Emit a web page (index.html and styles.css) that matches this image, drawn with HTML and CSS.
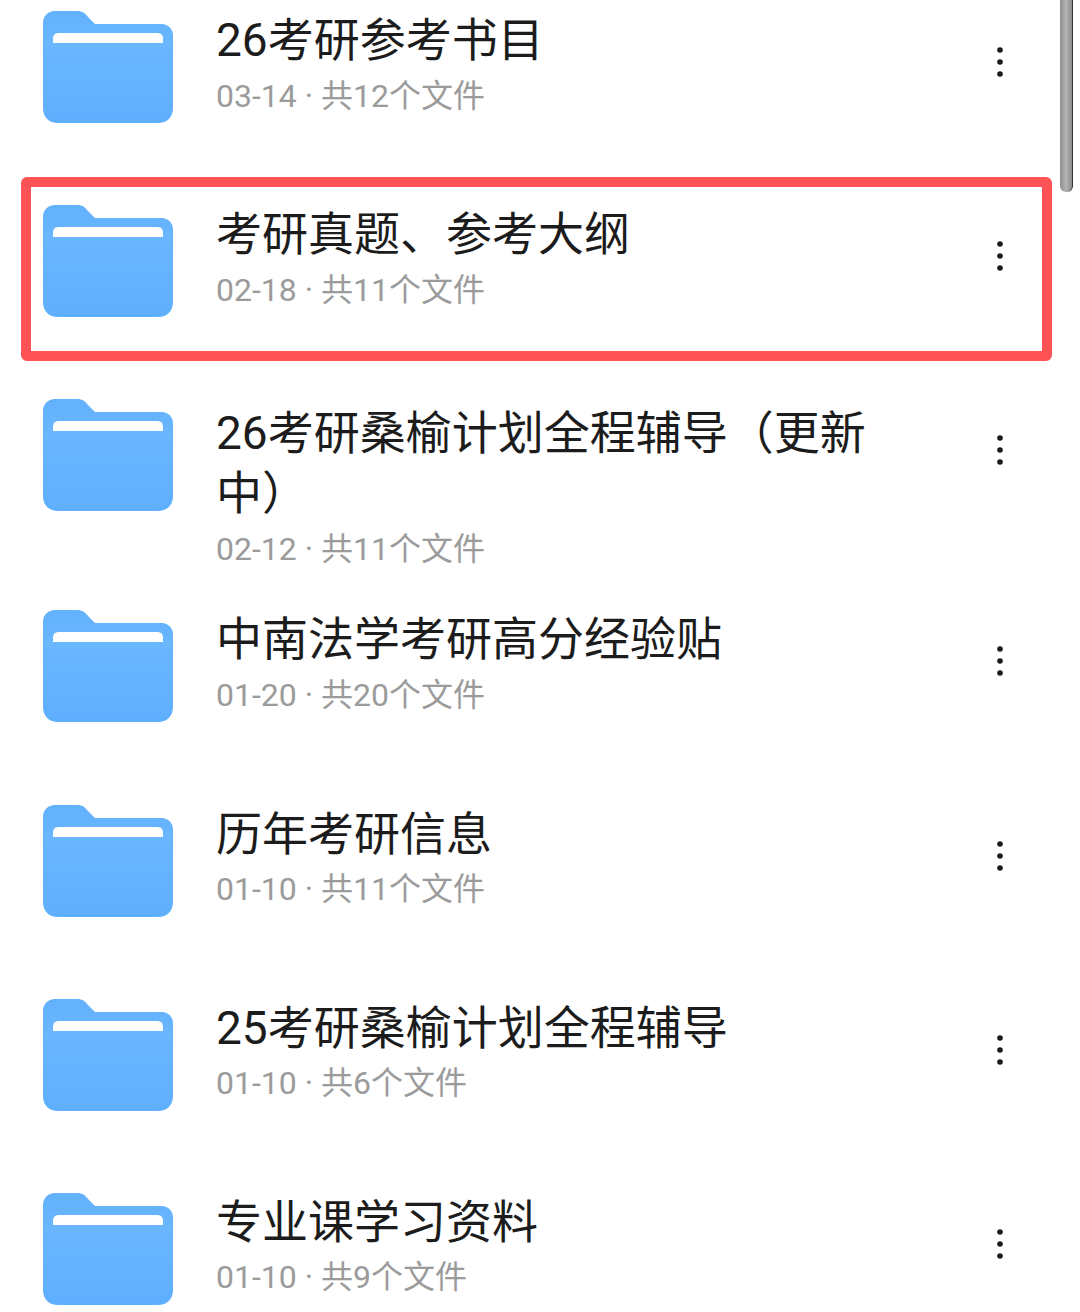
FILE: index.html
```html
<!DOCTYPE html>
<html lang="zh-CN">
<head>
    <meta charset="UTF-8">
    <meta name="viewport" content="width=device-width, initial-scale=1.0">
    <title>文件夹列表</title>
    <link rel="stylesheet" href="styles.css">
</head>
<body>
    <svg class="icon-defs" width="0" height="0" aria-hidden="true">
        <defs>
            <linearGradient id="folder-fill" x1="0" y1="0" x2="0" y2="1">
                <stop offset="0" stop-color="#62b1fc"/>
                <stop offset="0.3" stop-color="#6ab6ff"/>
                <stop offset="1" stop-color="#5fafff"/>
            </linearGradient>
            <symbol id="folder" viewBox="0 0 130 112">
                <path fill="url(#folder-fill)" d="M0 12C0 5 5 0 12 0H34C39 0 42 2 45 6L52 13H119C125 13 130 18 130 24V97C130 106 124 112 115 112H15C6 112 0 106 0 97Z"/>
                <path fill="#fff" d="M10 32V28C10 24 12 22 16 22H114C118 22 120 24 120 28V32Z"/>
            </symbol>
            <symbol id="dots" viewBox="0 0 10 34">
                <circle cx="5" cy="5" r="2.8" fill="#1a1a1a"/>
                <circle cx="5" cy="17" r="2.8" fill="#1a1a1a"/>
                <circle cx="5" cy="29" r="2.8" fill="#1a1a1a"/>
            </symbol>
        </defs>
    </svg>

    <div class="scrollbar"></div>

    <ul class="folder-list">
        <li class="folder-row">
            <svg class="folder-icon"><use href="#folder"/></svg>
            <div class="folder-info">
                <div class="folder-name">26考研参考书目</div>
                <div class="folder-meta">03-14 · 共12个文件</div>
            </div>
            <svg class="more-icon"><use href="#dots"/></svg>
        </li>
        <li class="folder-row highlighted">
            <svg class="folder-icon"><use href="#folder"/></svg>
            <div class="folder-info">
                <div class="folder-name">考研真题、参考大纲</div>
                <div class="folder-meta">02-18 · 共11个文件</div>
            </div>
            <svg class="more-icon"><use href="#dots"/></svg>
        </li>
        <li class="folder-row tall">
            <svg class="folder-icon"><use href="#folder"/></svg>
            <div class="folder-info">
                <div class="folder-name">26考研桑榆计划全程辅导（更新中）</div>
                <div class="folder-meta">02-12 · 共11个文件</div>
            </div>
            <svg class="more-icon"><use href="#dots"/></svg>
        </li>
        <li class="folder-row">
            <svg class="folder-icon"><use href="#folder"/></svg>
            <div class="folder-info">
                <div class="folder-name">中南法学考研高分经验贴</div>
                <div class="folder-meta">01-20 · 共20个文件</div>
            </div>
            <svg class="more-icon"><use href="#dots"/></svg>
        </li>
        <li class="folder-row">
            <svg class="folder-icon"><use href="#folder"/></svg>
            <div class="folder-info">
                <div class="folder-name">历年考研信息</div>
                <div class="folder-meta">01-10 · 共11个文件</div>
            </div>
            <svg class="more-icon"><use href="#dots"/></svg>
        </li>
        <li class="folder-row">
            <svg class="folder-icon"><use href="#folder"/></svg>
            <div class="folder-info">
                <div class="folder-name">25考研桑榆计划全程辅导</div>
                <div class="folder-meta">01-10 · 共6个文件</div>
            </div>
            <svg class="more-icon"><use href="#dots"/></svg>
        </li>
        <li class="folder-row">
            <svg class="folder-icon"><use href="#folder"/></svg>
            <div class="folder-info">
                <div class="folder-name">专业课学习资料</div>
                <div class="folder-meta">01-10 · 共9个文件</div>
            </div>
            <svg class="more-icon"><use href="#dots"/></svg>
        </li>
    </ul>
</body>
</html>
```

FILE: styles.css
```css
html, body {
    height: 1312px;
    overflow: hidden;
}

body {
    position: relative;
    margin: 0;
    background-color: #fff;
    font-family: Roboto, "Noto Sans CJK SC", sans-serif;
}

.icon-defs {
    position: absolute;
}

.folder-list {
    box-sizing: border-box;
    height: 1312px;
    overflow: hidden;
    list-style-type: none;
    margin: 0;
    padding: 11px 0 0 43px;
}

.folder-row {
    position: relative;
    display: flex;
    align-items: flex-start;
    height: 194.2px;
}

.folder-row.tall {
    height: 211px;
}

.folder-row.tall .folder-info {
    padding-top: 5px;
}

/* red box drawn over the second row */
.folder-row.highlighted::after {
    content: "";
    position: absolute;
    top: -28px;
    left: -22px;
    width: 1031px;
    height: 184px;
    box-sizing: border-box;
    border: 10px solid #fd5256;
    border-radius: 6px;
}

.folder-icon {
    flex: none;
    width: 130px;
    height: 112px;
}

.folder-info {
    width: 680px;
    margin: -1px 0 0 43px;
}

.folder-name {
    color: #1c1c1c;
    font-size: 46px;
    line-height: 60px;
}

.folder-meta {
    margin-top: 5.5px;
    color: #9b9b9b;
    font-size: 32px;
    line-height: 40px;
}

.more-icon {
    position: absolute;
    top: 34px;
    left: 951.5px;
    width: 10px;
    height: 34px;
}

.scrollbar {
    position: absolute;
    top: -10px;
    left: 1060px;
    width: 13px;
    height: 202px;
    box-sizing: border-box;
    border-right: 1px solid #333;
    border-radius: 0 0 6px 6px;
    background: linear-gradient(to right, #8f8f8f, #b4b4b4 50%, #8a8a8a);
}
```
